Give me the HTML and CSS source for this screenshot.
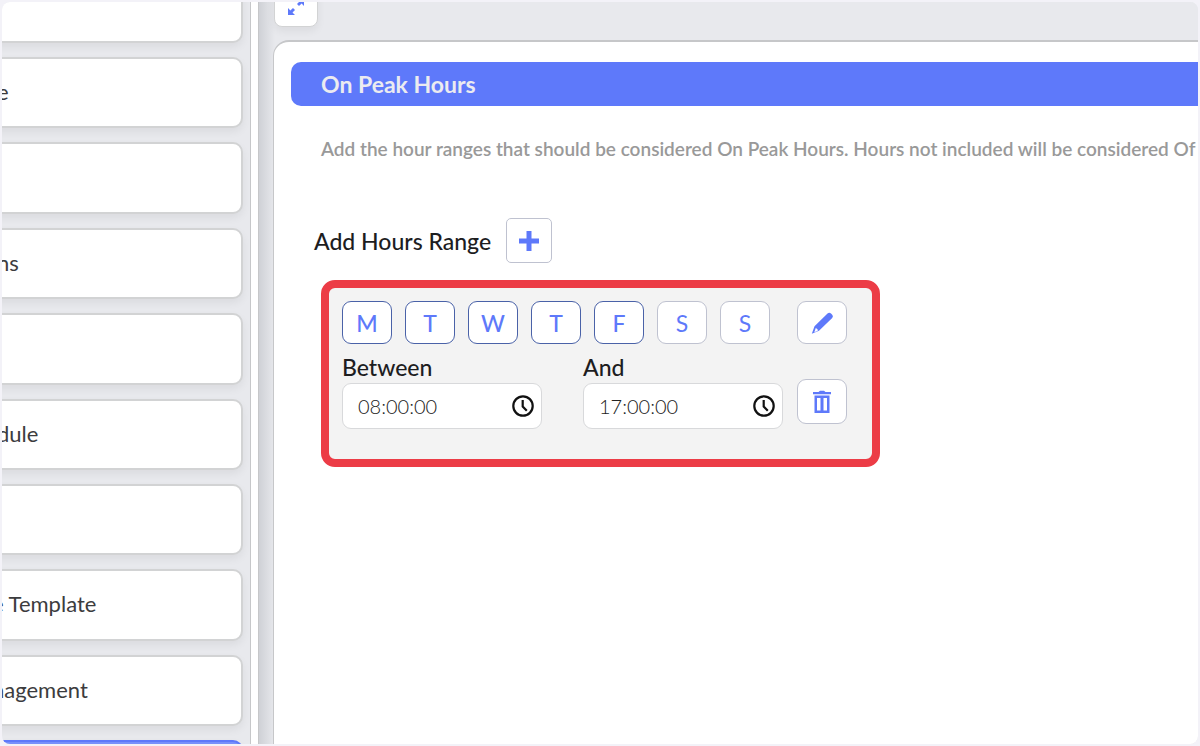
FILE: index.html
```html
<!DOCTYPE html>
<html lang="en">
  <head>
    <meta charset="UTF-8" />
    <meta name="viewport" content="width=device-width, initial-scale=1.0" />

    <title>On Peak Hours</title>
    <link rel="stylesheet" href="styles.css">
  </head>
  <body>
    <div class="app">
      <nav class="sidebar">
        <a class="menu-item first" href="#" aria-label="Menu item"></a>
        <a class="menu-item" href="#">e</a>
        <a class="menu-item" href="#" aria-label="Menu item"></a>
        <a class="menu-item" href="#">ns</a>
        <a class="menu-item" href="#" aria-label="Menu item"></a>
        <a class="menu-item" href="#">dule</a>
        <a class="menu-item" href="#" aria-label="Menu item"></a>
        <a class="menu-item long" href="#">e Template</a>
        <a class="menu-item long" href="#">nagement</a>
        <a class="menu-item active" href="#" aria-label="Current page"></a>
      </nav>
      <div class="divider"></div>
      <main class="main">
        <div class="toolbar">
          <button class="expand-btn" type="button" aria-label="Expand">
            <svg width="20" height="20" viewBox="0 0 20 20" fill="#5e79fa">
              <path d="M2 18v-7l2.400 2.400L7 11l2 2-2.500 2.500L9 18z" />
              <path d="M18 2v7l-2.400-2.400L13 9l-2-2 2.500-2.500L11 2z" />
            </svg>
          </button>
        </div>
        <section class="panel">
          <h1 class="panel-title">On Peak Hours</h1>
          <p class="description">Add the hour ranges that should be considered On Peak Hours. Hours not included will be considered Of</p>

          <div class="add-range">
            <span id="add-label">Add Hours Range</span>
            <button class="add-btn" type="button" aria-labelledby="add-label">
              <svg width="20" height="20" viewBox="0 0 20 20" fill="#5e79fa">
                <path d="M7.500 0h5v7.500H20v5h-7.500V20h-5v-7.500H0v-5h7.500z" />
              </svg>
            </button>
          </div>

          <form class="range">
            <div class="days">
              <button class="btn selected" type="button" aria-pressed="true">M</button>
              <button class="btn selected" type="button" aria-pressed="true">T</button>
              <button class="btn selected" type="button" aria-pressed="true">W</button>
              <button class="btn selected" type="button" aria-pressed="true">T</button>
              <button class="btn selected" type="button" aria-pressed="true">F</button>
              <button class="btn" type="button" aria-pressed="false">S</button>
              <button class="btn" type="button" aria-pressed="false">S</button>
            </div>
            <button class="btn" type="button" aria-label="Edit">
              <svg width="24" height="24" viewBox="0 0 24 24" fill="#5e79fa">
                <path d="M17.500 2.500Q19.300.800 21 2.500l1.200 1.200q1.500 1.500 0 3.200L9 19.800 1.800 22.800l2.700-7.500zM5.800 17l-1.500 4.200 3.500-1.500-.3-1.500z" fill-rule="evenodd" />
              </svg>
            </button>
            <div class="times">
              <div class="field">
                <label for="between">Between</label>
                <div class="time-box">
                  <input type="text" id="between" value="08:00:00" />
                  <svg class="clock" width="24" height="24" viewBox="0 0 24 24" fill="none" stroke="#111" stroke-width="2.200">
                    <circle cx="12" cy="12" r="9.700" />
                    <path d="M11.700 6v6.500l4.100 4.200" />
                  </svg>
                </div>
              </div>
              <div class="field">
                <label for="and">And</label>
                <div class="time-box">
                  <input type="text" id="and" value="17:00:00" />
                  <svg class="clock" width="24" height="24" viewBox="0 0 24 24" fill="none" stroke="#111" stroke-width="2.200">
                    <circle cx="12" cy="12" r="9.700" />
                    <path d="M11.700 6v6.500l4.100 4.200" />
                  </svg>
                </div>
              </div>
            </div>
            <button class="btn delete-btn" type="button" aria-label="Delete">
              <svg width="20" height="24" viewBox="0 0 20 24" fill="#5e79fa">
                <path d="M1 2h5.500l1.500-1.300h4L13.500 2H19v2.300H1z" />
                <path fill-rule="evenodd" d="M2.500 5.500h15v17.500h-15zM5 8v12.500h3.500V8zm6.500 0v12.500H15V8z" />
              </svg>
            </button>
          </form>
        </section>
      </main>
    </div>
  </body>
</html>
```

FILE: styles.css
```css
* {
  margin: 0;
  padding: 0;
  box-sizing: border-box;
}

body {
  font-family: Lato, "Liberation Sans", sans-serif;
  font-size: 23px;
  color: #1d1d1f;
  background-color: #f3f2f8;
}

button,
input {
  font: inherit;
}

svg {
  display: block;
}

.app {
  display: flex;
  height: 100vh;
  border: 2px solid #f3f2f8;
  border-radius: 10px;
  background-color: #e8e9ed;
  overflow: hidden;
}

/* Sidebar */
.sidebar {
  flex: 0 0 248px;
  display: flex;
  flex-direction: column;
  gap: 14px;
  padding-right: 7px;
  overflow: hidden;
}

.menu-item {
  flex: 1;
  display: flex;
  align-items: center;
  margin-left: -16px;
  padding: 0 0 2px 9px;
  border: 2px solid #d2d3d4;
  border-radius: 10px;
  background-color: #fff;
  box-shadow: 0 4px 8px rgba(0, 0, 0, 0.06);
  color: #3c3c3e;
  font-size: 22px;
  white-space: nowrap;
  text-decoration: none;
}

.menu-item.long {
  padding-left: 4px;
}

.menu-item.first {
  flex: 0 0 71px;
  margin-top: -30px;
}

.menu-item.active {
  flex: 0 0 71px;
  margin-bottom: -67px;
  border-color: #5e79fa;
  background-color: #7790fb;
}

.divider {
  flex: 0 0 9px;
  border: 1px solid #c6c7c9;
  border-width: 0 1px;
  background-color: #fff;
}

/* Main area */
.main {
  flex: 1;
  min-width: 0;
  display: flex;
  flex-direction: column;
  padding-left: 14px;
  background: linear-gradient(to right, #cfd1d6, #e8e9ed 16px);
}

.toolbar {
  height: 38px;
  padding-left: 1px;
}

.expand-btn {
  display: flex;
  justify-content: center;
  align-items: flex-end;
  width: 44px;
  height: 44px;
  margin-top: -19px;
  padding-bottom: 9px;
  border: 1px solid #d2d3d4;
  border-radius: 8px;
  background-color: #fff;
  box-shadow: 0 4px 8px rgba(0, 0, 0, 0.06);
  cursor: pointer;
}

.panel {
  flex: 1;
  padding: 20px 0 0 17px;
  border: 2px solid #c6c7c9;
  border-width: 2px 0 0 1px;
  border-radius: 16px 0 0 0;
  background-color: #fff;
  overflow: hidden;
}

.panel-title {
  padding: 0 30px;
  border-radius: 10px 0 0 10px;
  background-color: #5e79fa;
  color: #ebebf0;
  font-size: 23px;
  font-weight: bold;
  line-height: 44px;
}

.description {
  margin: 31px 0 0 30px;
  color: #999;
  font-size: 19px;
  font-weight: 600;
  line-height: 24px;
  white-space: nowrap;
}

.add-range {
  display: flex;
  align-items: center;
  gap: 15px;
  margin: 57px 0 0 23px;
  font-weight: 500;
}

.add-btn {
  display: flex;
  justify-content: center;
  align-items: center;
  width: 46px;
  height: 45px;
  border: 1px solid #bfc2d0;
  border-radius: 5px;
  background-color: #fff;
  cursor: pointer;
}

/* Hours range */
.range {
  display: grid;
  grid-template-columns: 441px 50px;
  column-gap: 14px;
  row-gap: 11px;
  width: 559px;
  margin: 17px 0 0 30px;
  padding: 13px 12px 30px 13px;
  border: 8px solid #ec3c46;
  border-radius: 14px;
  background-color: #f3f3f3;
}

.days {
  display: flex;
  gap: 13px;
}

.btn {
  display: flex;
  justify-content: center;
  align-items: center;
  width: 50px;
  height: 43px;
  border: 1px solid #bfc2d0;
  border-radius: 9px;
  background-color: #fff;
  color: #5e79fa;
  cursor: pointer;
}

.btn.selected {
  border-color: #4a62a8;
  font-weight: 500;
}

.delete-btn {
  height: 45px;
  margin-top: 24px;
}

.times {
  display: flex;
  justify-content: space-between;
}

.field {
  width: 200px;
}

.field label {
  display: block;
  font-weight: 500;
  line-height: 24px;
}

.time-box {
  display: flex;
  align-items: center;
  height: 46px;
  margin-top: 4px;
  padding: 0 6px 0 15px;
  border: 1px solid #d8d9db;
  border-radius: 9px;
  background-color: #fff;
}

.time-box input {
  flex: 1;
  min-width: 0;
  border: none;
  outline: none;
  background: none;
  color: #222;
  font-size: 20px;
  font-weight: 300;
}

.clock {
  flex-shrink: 0;
}
```
